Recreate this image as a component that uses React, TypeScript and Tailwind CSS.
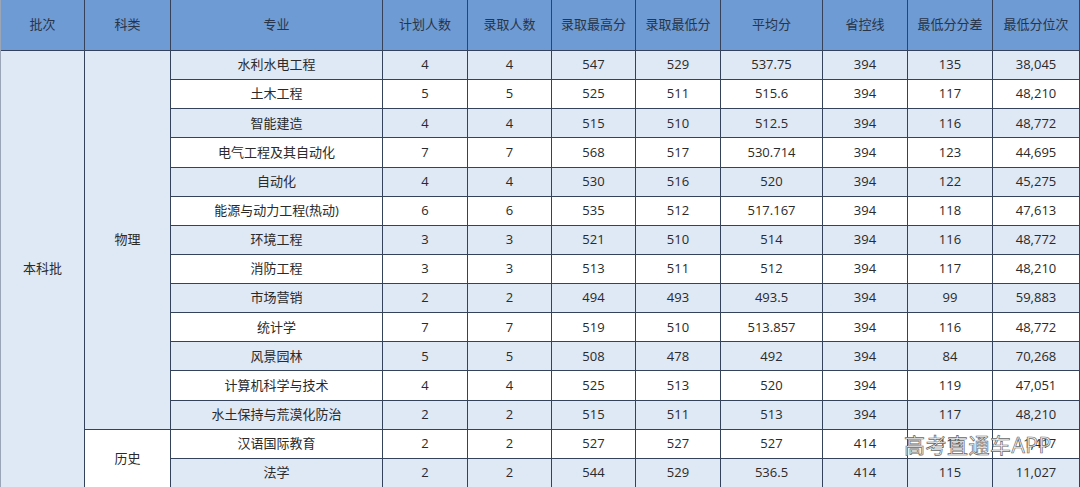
import React from "react";

const headers = ["批次", "科类", "专业", "计划人数", "录取人数", "录取最高分", "录取最低分", "平均分", "省控线", "最低分分差", "最低分位次"];

const rows: string[][] = [
  ["水利水电工程", "4", "4", "547", "529", "537.75", "394", "135", "38,045"],
  ["土木工程", "5", "5", "525", "511", "515.6", "394", "117", "48,210"],
  ["智能建造", "4", "4", "515", "510", "512.5", "394", "116", "48,772"],
  ["电气工程及其自动化", "7", "7", "568", "517", "530.714", "394", "123", "44,695"],
  ["自动化", "4", "4", "530", "516", "520", "394", "122", "45,275"],
  ["能源与动力工程(热动)", "6", "6", "535", "512", "517.167", "394", "118", "47,613"],
  ["环境工程", "3", "3", "521", "510", "514", "394", "116", "48,772"],
  ["消防工程", "3", "3", "513", "511", "512", "394", "117", "48,210"],
  ["市场营销", "2", "2", "494", "493", "493.5", "394", "99", "59,883"],
  ["统计学", "7", "7", "519", "510", "513.857", "394", "116", "48,772"],
  ["风景园林", "5", "5", "508", "478", "492", "394", "84", "70,268"],
  ["计算机科学与技术", "4", "4", "525", "513", "520", "394", "119", "47,051"],
  ["水土保持与荒漠化防治", "2", "2", "515", "511", "513", "394", "117", "48,210"],
  ["汉语国际教育", "2", "2", "527", "527", "527", "414", "113", "11,417"],
  ["法学", "2", "2", "544", "529", "536.5", "414", "115", "11,027"],
];

const font = { fontFamily: '"Open Sans", "Noto Sans CJK SC", sans-serif' };

export default function App() {
  return (
    <div className="relative w-[1080px] h-[487px] overflow-hidden bg-white" style={font}>
      <div className="grid h-[487px] w-[1080px] gap-px bg-[#34425a] border-l border-l-[#9aa6b8] pr-px grid-cols-[83px_85px_211px_84px_83px_83px_84px_101px_84px_84px_86px] grid-rows-[50px_repeat(15,minmax(0,1fr))] text-[13px] text-[#2a2a2a]">
        {headers.map((h) => (
          <div key={h} className="flex items-center justify-center bg-[#6e9bd3] text-[#28344a]">
            {h}
          </div>
        ))}
        <div className="col-start-1 row-start-2 row-span-15 flex items-center justify-center bg-[#dfe8f5]">本科批</div>
        <div className="col-start-2 row-start-2 row-span-13 flex items-center justify-center bg-[#dfe8f5]">物理</div>
        <div className="col-start-2 row-start-15 row-span-2 flex items-center justify-center bg-white">历史</div>
        {rows.map((r, i) =>
          r.map((c, j) => (
            <div
              key={`${i}-${j}`}
              className={`flex items-center justify-center ${i % 2 === 0 ? "bg-[#dfe8f5]" : "bg-white"}`}
              style={{ gridColumnStart: j + 3, gridRowStart: i + 2 }}
            >
              {c}
            </div>
          ))
        )}
      </div>
      <div className="absolute left-[904px] top-[432px] text-[21px] leading-[26px] text-white [-webkit-text-stroke:0.7px_#666] tracking-[0.5px]">
        高考直通车APP
      </div>
    </div>
  );
}
